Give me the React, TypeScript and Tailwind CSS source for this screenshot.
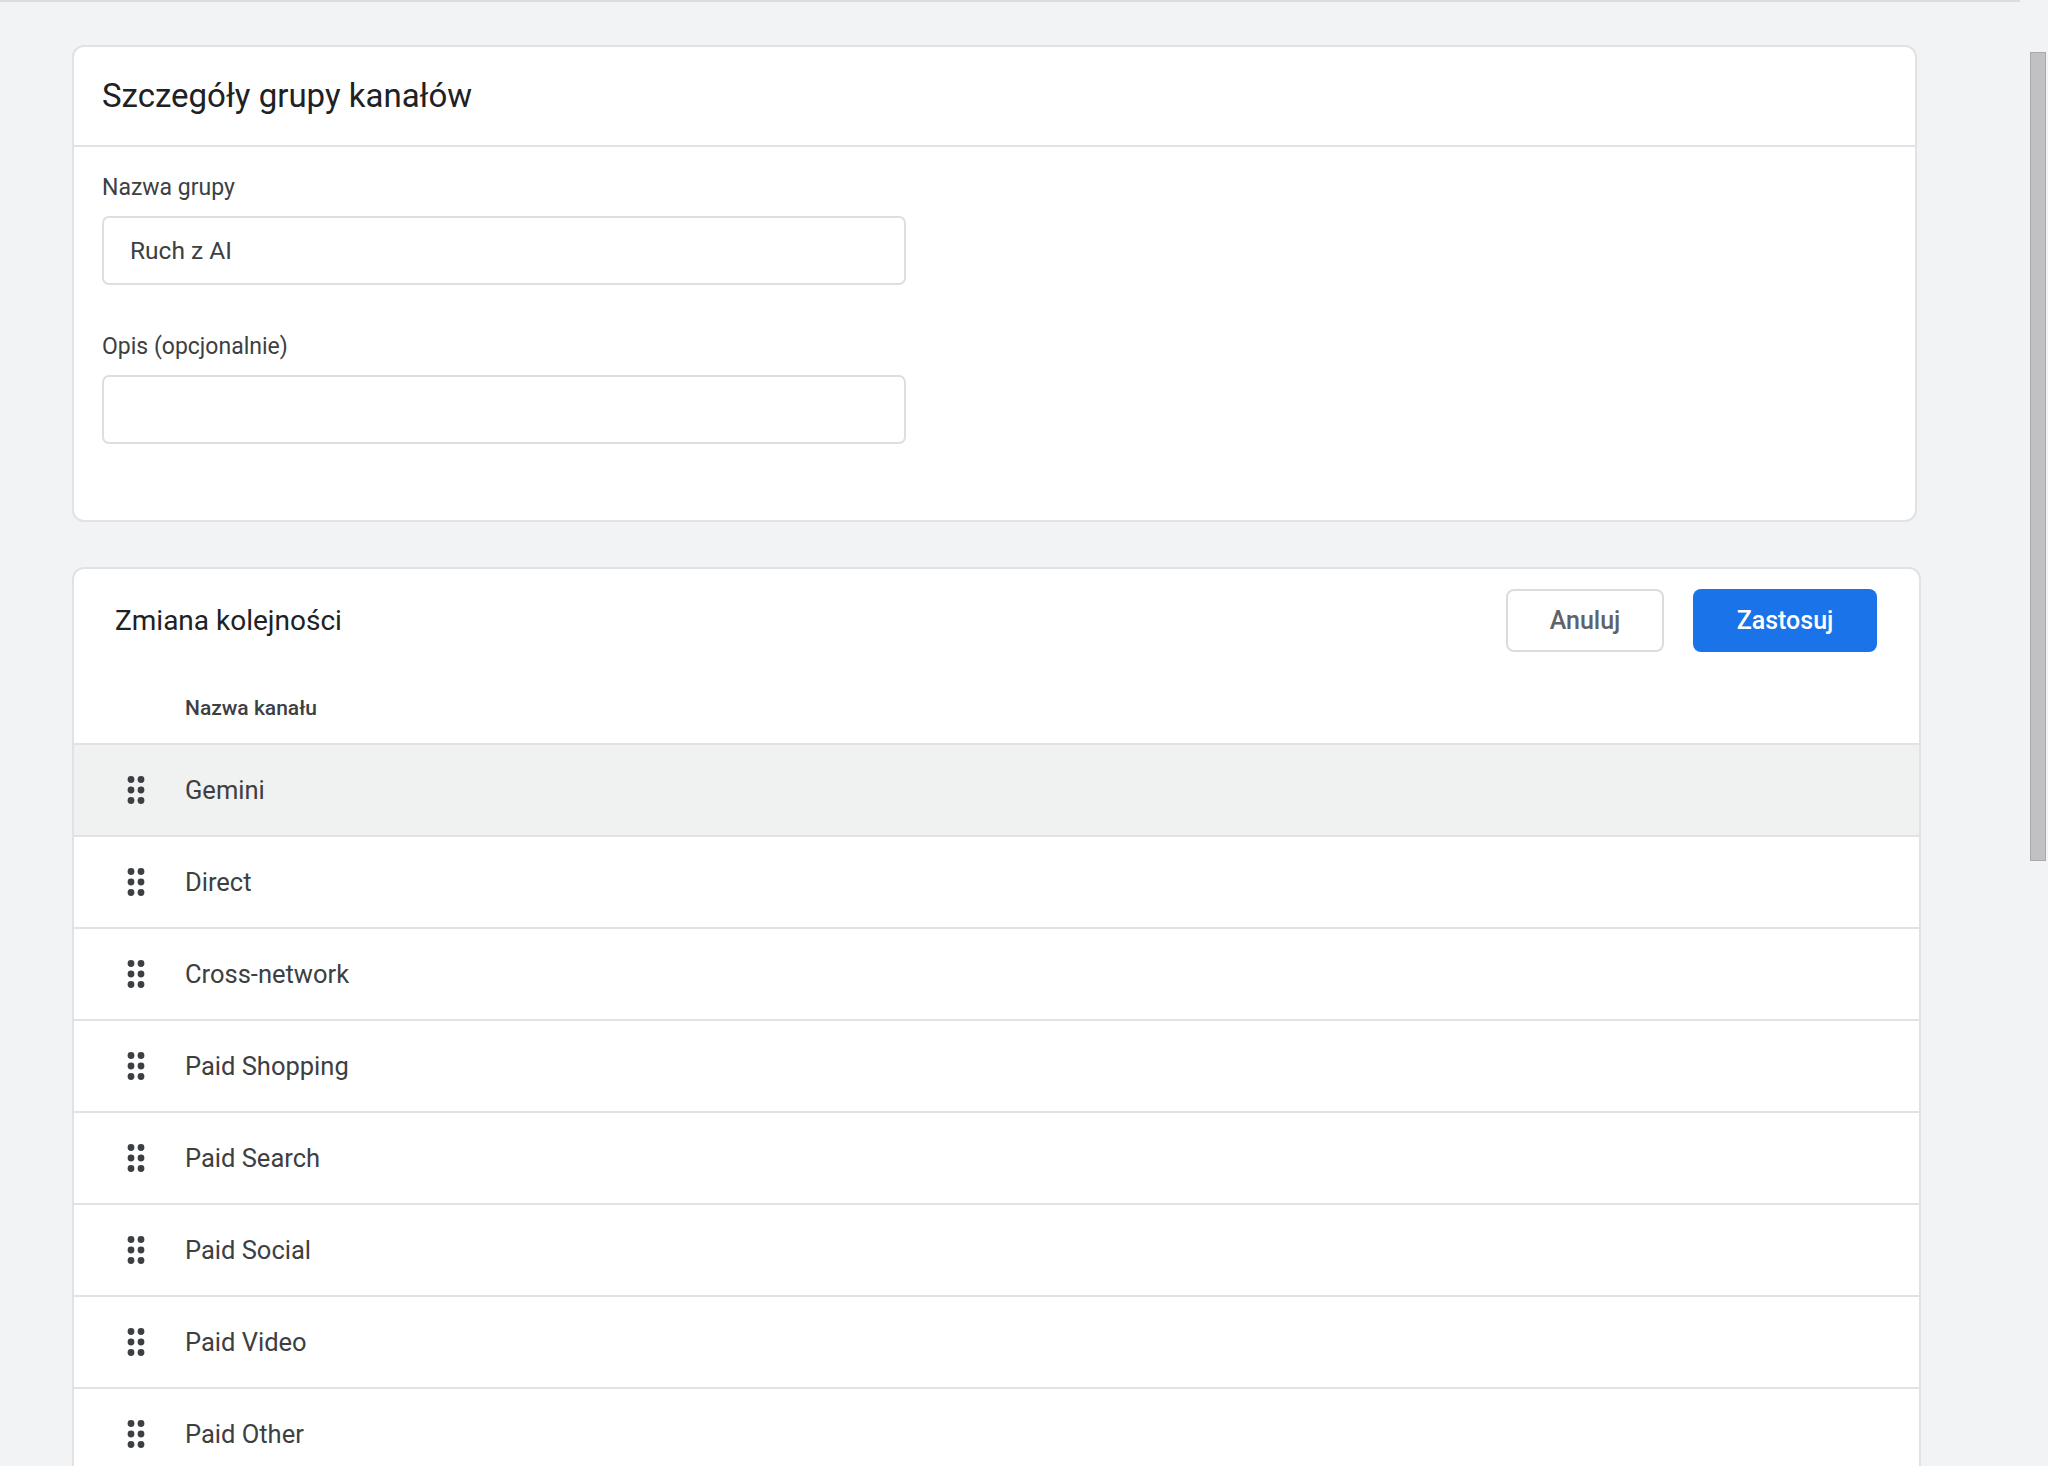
import React from "react";

const channels = [
  "Gemini",
  "Direct",
  "Cross-network",
  "Paid Shopping",
  "Paid Search",
  "Paid Social",
  "Paid Video",
  "Paid Other",
];

function DragIcon() {
  return (
    <svg width="18" height="32" viewBox="0 0 18 32" className="shrink-0">
      {[0, 1, 2].map((r) =>
        [0, 1].map((c) => (
          <circle key={`${r}-${c}`} cx={4 + c * 10} cy={5.5 + r * 10.5} r={3.4} fill="#3c4043" />
        ))
      )}
    </svg>
  );
}

export default function App() {
  return (
    <div
      className="relative h-[1466px] w-[2048px] overflow-hidden bg-[#f1f3f4] text-[#3c4043]"
      style={{ fontFamily: "Roboto, 'Noto Sans', Arial, sans-serif" }}
    >
      <div className="h-[2px] w-[2020px] bg-[#dadce0]" />

      <div className="flex flex-col gap-[45px] pl-[72px] pt-[43px]">
        {/* Card 1 */}
        <section className="w-[1845px] rounded-[12px] border-2 border-[#e0e2e6] bg-white">
          <div className="flex h-[100px] items-center border-b-2 border-[#e0e2e6] px-[28px]">
            <h1 className="text-[33px] leading-[40px] text-[#202124]">Szczegóły grupy kanałów</h1>
          </div>
          <div className="flex flex-col px-[28px] pb-[76px] pt-[27px]">
            <label className="text-[23px] leading-[28px] text-[#3c4043]">Nazwa grupy</label>
            <div className="mt-[14px] flex h-[69px] w-[804px] items-center rounded-[7px] border-2 border-[#dcdee3] px-[26px] pt-[2px] text-[24.5px] text-[#3c4043]">
              Ruch z AI
            </div>
            <label className="mt-[48px] text-[23px] leading-[28px] text-[#3c4043]">Opis (opcjonalnie)</label>
            <div className="mt-[14px] h-[69px] w-[804px] rounded-[7px] border-2 border-[#dcdee3]" />
          </div>
        </section>

        {/* Card 2 */}
        <section className="w-[1849px] rounded-t-[12px] border-x-2 border-t-2 border-[#e0e2e6] bg-white">
          <div className="flex items-center justify-between pl-[41px] pr-[42px] pt-[20px]">
            <h2 className="text-[28px] leading-[36px] text-[#202124]">Zmiana kolejności</h2>
            <div className="flex items-center gap-[29px]">
              <button className="flex h-[63px] w-[158px] items-center justify-center rounded-[8px] border-2 border-[#dadce0] bg-white text-[25px] font-medium text-[#5f6368]">
                Anuluj
              </button>
              <button className="flex h-[63px] w-[184px] items-center justify-center rounded-[8px] bg-[#1a73e8] text-[25px] font-medium text-white">
                Zastosuj
              </button>
            </div>
          </div>
          <div className="pb-[23px] pl-[111px] pt-[44px] text-[21px] font-medium leading-[24px] text-[#3c4043]">
            Nazwa kanału
          </div>
          <div className="flex flex-col">
            {channels.map((name, i) => (
              <div
                key={name}
                className={`flex h-[92px] items-center border-t-2 border-[#e0e2e6] pl-[53px] ${
                  i === 0 ? "bg-[#f0f1f1]" : "bg-white"
                }`}
              >
                <DragIcon />
                <span className="ml-[40px] text-[25.5px] text-[#3c4043]">{name}</span>
              </div>
            ))}
          </div>
        </section>
      </div>

      {/* scrollbar */}
      <div className="absolute left-[2030px] top-[52px] h-[809px] w-[16px] border border-[#a9a9ab] bg-[#c1c1c3]" />
    </div>
  );
}
